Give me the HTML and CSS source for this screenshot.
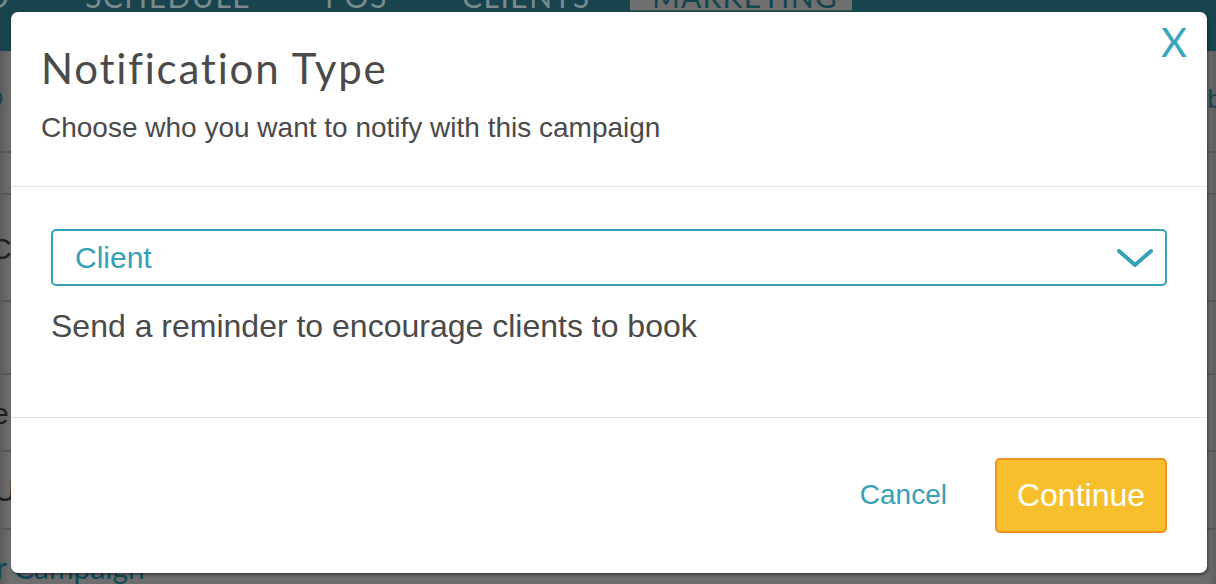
FILE: index.html
```html
<!DOCTYPE html>
<html lang="en">
<head>
<meta charset="utf-8">
<title>Notification Type</title>
<link rel="stylesheet" href="styles.css">
</head>
<body>
<div class="page">
  <nav class="topnav">
    <div class="tabs">
      <span class="tab tab-first">D</span>
      <span class="tab tab-schedule">SCHEDULE</span>
      <span class="tab tab-pos">POS</span>
      <span class="tab tab-clients">CLIENTS</span>
      <span class="tab tab-active">MARKETING</span>
    </div>
  </nav>
  <div class="row row-1"><span class="frag frag-link">D</span><span class="frag frag-right">b</span></div>
  <div class="row row-2"></div>
  <div class="row row-3"><span class="frag frag-c">C</span></div>
  <div class="row row-4"></div>
  <div class="row row-5"><span class="frag frag-e">e</span></div>
  <div class="row row-6"><span class="frag frag-u">U</span></div>
  <div class="row row-7"><span class="frag frag-campaign">r Campaign</span></div>
</div>

<div class="modal" role="dialog" aria-labelledby="modal-title">
  <button class="close" type="button" aria-label="Close">X</button>
  <header class="modal-header">
    <h1 id="modal-title" class="modal-title">Notification Type</h1>
    <p class="modal-subtitle">Choose who you want to notify with this campaign</p>
  </header>
  <section class="modal-body">
    <div class="select">
      <span class="select-value">Client</span>
      <svg class="chevron" width="38" height="20" viewBox="0 0 38 20" aria-hidden="true">
        <polyline points="3,3 19,17 35,3" fill="none" stroke="#35a0b8" stroke-width="4" stroke-linecap="round" stroke-linejoin="round"/>
      </svg>
    </div>
    <p class="description">Send a reminder to encourage clients to book</p>
  </section>
  <footer class="modal-footer">
    <button class="btn-cancel" type="button">Cancel</button>
    <button class="btn-continue" type="button">Continue</button>
  </footer>
</div>
</body>
</html>
```

FILE: styles.css
```css
* { box-sizing: border-box; }

html, body {
  margin: 0;
  padding: 0;
}

body {
  width: 1216px;
  height: 584px;
  overflow: hidden;
  position: relative;
  background: #6b6b6b;
  font-family: "Liberation Sans", Arial, sans-serif;
}

/* ---------- dimmed page behind the dialog ---------- */
.page {
  display: flex;
  flex-direction: column;
  background: linear-gradient(to right, #5c5c5c 0px, #6e6e6e 10px, #6e6e6e 1206px, #5e5e5e 1216px);
}

.topnav {
  height: 51px;
  background: #17444d;
  overflow: hidden;
}

.tabs {
  display: flex;
  align-items: flex-start;
  height: 51px;
  margin-top: -19px;
}

.tab {
  font-family: Lato, "Noto Sans", sans-serif;
  font-size: 30px;
  letter-spacing: 1.5px;
  color: #7a8a8d;
  line-height: 30px;
  height: 30px;
}

.tab-first { margin-left: -14px; width: 99px; }
.tab-schedule { width: 240px; }
.tab-pos { width: 137px; }
.tab-clients { width: 168px; }
.tab-active {
  background: #6f6f6f;
  color: #134550;
  padding: 0 14px 0 22px;
  letter-spacing: 1.2px;
  border-bottom: 1px solid #3a4e52;
}

.row {
  display: flex;
  justify-content: space-between;
  align-items: center;
  border-bottom: 2px solid #585858;
  font-size: 30px;
  color: #1e1e1e;
}

.row-1 { height: 102px; }
.row-2 { height: 42px; }
.row-3 { height: 107px; }
.row-4 { height: 73px; }
.row-5 { height: 77px; }
.row-6 { height: 78px; }
.row-7 { height: 60px; border-bottom: 0; align-items: flex-start; }

.frag { line-height: 1; }
.frag-link { color: #134550; margin-left: -14px; margin-top: -4px; font-size: 24px; }
.frag-right { color: #134550; margin-right: -6px; margin-top: -4px; font-size: 26px; }
.frag-c { margin-left: -10px; margin-top: 2px; }
.frag-e { margin-left: -8px; margin-top: 2px; }
.frag-u { margin-left: -6px; margin-top: 2px; }
.frag-campaign {
  font-family: Lato, "Noto Sans", sans-serif;
  color: #124956;
  font-size: 30px;
  margin-left: -4px;
  margin-top: 22px;
}

/* ---------- dialog ---------- */
.modal {
  position: absolute;
  left: 11px;
  top: 12px;
  width: 1196px;
  height: 561px;
  background: #ffffff;
  border-radius: 7px;
  box-shadow: 1px 2px 3px rgba(0, 0, 0, 0.45);
  display: flex;
  flex-direction: column;
}

.close {
  position: absolute;
  top: 6px;
  right: 20px;
  border: 0;
  background: none;
  padding: 0;
  font-family: Lato, "Noto Sans", sans-serif;
  font-weight: 400;
  font-size: 40px;
  line-height: 48px;
  color: #35a6bd;
  cursor: pointer;
}

.modal-header {
  padding: 32px 30px 0 30px;
  height: 175px;
  border-bottom: 1px solid #e3e3e3;
}

.modal-title {
  margin: 0;
  font-family: Lato, "Noto Sans", sans-serif;
  font-weight: 400;
  font-size: 42px;
  letter-spacing: 1.8px;
  line-height: 48px;
  color: #4a4a4a;
}

.modal-subtitle {
  margin: 20px 0 0 0;
  font-size: 28px;
  line-height: 32px;
  color: #4a4a4a;
}

.modal-body {
  padding: 42px 40px 0 40px;
  height: 231px;
  border-bottom: 1px solid #e3e3e3;
}

.select {
  height: 57px;
  border: 2px solid #35a0b8;
  border-radius: 5px;
  display: flex;
  align-items: center;
  justify-content: space-between;
  padding: 0 11px 0 22px;
}

.select-value {
  font-size: 30px;
  color: #35a0b8;
}

.chevron { display: block; }

.description {
  margin: 22px 0 0 0;
  font-size: 32px;
  line-height: 37px;
  color: #4a4a4a;
}

.modal-footer {
  flex: 1;
  display: flex;
  align-items: center;
  justify-content: flex-end;
  gap: 48px;
  padding: 0 40px 1px 0;
}

.btn-cancel {
  border: 0;
  background: none;
  padding: 0;
  font-family: "Liberation Sans", Arial, sans-serif;
  font-size: 28px;
  color: #35a0b8;
  cursor: pointer;
}

.btn-continue {
  width: 172px;
  height: 75px;
  border: 2px solid #f0921f;
  border-radius: 5px;
  background: #f7bf2b;
  color: #ffffff;
  font-family: "Liberation Sans", Arial, sans-serif;
  font-size: 32px;
  padding: 0;
  cursor: pointer;
}
```
